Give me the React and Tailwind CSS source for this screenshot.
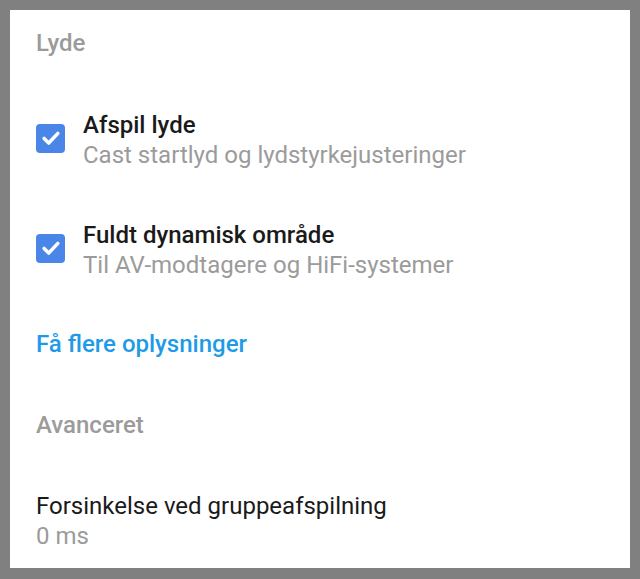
const CheckBox = () => (
  <div className="w-[29px] h-[29px] rounded-[4px] bg-[#4a86e8] flex items-center justify-center shrink-0">
    <svg width="22" height="22" viewBox="0 0 24 24" fill="none">
      <path d="M4.5 12.5l5 5L19.5 7" stroke="white" strokeWidth="3.8" strokeLinecap="round" strokeLinejoin="round" />
    </svg>
  </div>
);

function CheckRow({ title, subtitle, className = '' }) {
  return (
    <div className={`flex items-center gap-[18px] ${className}`}>
      <div className="mt-[-4px]">
        <CheckBox />
      </div>
      <div className="flex flex-col">
        <span className="text-[24px] leading-[30px] font-medium text-[#1a1a1a]">{title}</span>
        <span className="text-[24px] leading-[30px] text-[#9b9b9b]">{subtitle}</span>
      </div>
    </div>
  );
}

export default function App() {
  return (
    <div className="w-[640px] h-[579px] bg-[#808080] p-[10px] pb-[11px] font-['Roboto',sans-serif]">
      <div className="bg-white h-full pl-[26px] pt-[18px]">
        <div className="text-[24px] leading-[30px] font-medium text-[#9b9b9b]">Lyde</div>

        <CheckRow className="mt-[52px]" title="Afspil lyde" subtitle="Cast startlyd og lydstyrkejusteringer" />
        <CheckRow className="mt-[50px]" title="Fuldt dynamisk område" subtitle="Til AV-modtagere og HiFi-systemer" />

        <div className="mt-[49px] text-[24px] leading-[30px] font-medium text-[#1e9be6]">Få flere oplysninger</div>

        <div className="mt-[51px] text-[24px] leading-[30px] font-medium text-[#9b9b9b]">Avanceret</div>

        <div className="mt-[51px] flex flex-col">
          <span className="text-[24px] leading-[30px] text-[#1a1a1a]">Forsinkelse ved gruppeafspilning</span>
          <span className="text-[24px] leading-[30px] text-[#9b9b9b]">0 ms</span>
        </div>
      </div>
    </div>
  );
}
